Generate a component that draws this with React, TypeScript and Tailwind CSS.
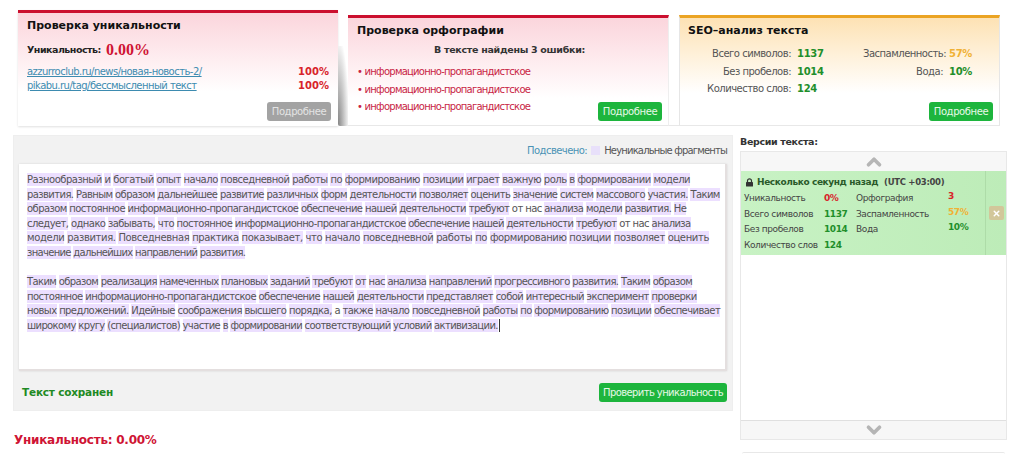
import React from 'react';
import { ChevronDown, ChevronUp, X } from 'lucide-react';

const firstParagraph = [
  { text: 'Разнообразный и богатый опыт начало повседневной работы по формированию позиции играет важную роль в формировании модели', fit: 'tracking-[-0.49px]' },
  { text: 'развития. Равным образом дальнейшее развитие различных форм деятельности позволяет оценить значение систем массового участия. Таким', fit: 'tracking-[-0.59px]' },
  { text: 'образом постоянное информационно-пропагандистское обеспечение нашей деятельности требуют ~от ~нас анализа модели развития. Не', fit: 'tracking-[-0.58px]' },
  { text: 'следует, однако забывать, что постоянное информационно-пропагандистское обеспечение нашей деятельности требуют ~от ~нас анализа', fit: 'tracking-[-0.58px]' },
  { text: 'модели развития. Повседневная практика показывает, что начало повседневной работы по формированию позиции позволяет оценить', fit: 'tracking-[-0.37px]' },
  { text: 'значение дальнейших направлений развития.', fit: 'tracking-[-0.68px]' },
];

const secondParagraph = [
  { text: 'Таким образом реализация намеченных плановых заданий требуют от нас анализа направлений прогрессивного развития. Таким образом', fit: 'tracking-[-0.62px]' },
  { text: 'постоянное информационно-пропагандистское обеспечение нашей деятельности представляет собой интересный эксперимент проверки', fit: 'tracking-[-0.58px]' },
  { text: 'новых предложений. Идейные соображения высшего порядка, ~а также начало повседневной работы по формированию позиции обеспечивает', fit: 'tracking-[-0.57px]' },
  { text: 'широкому кругу (специалистов) участие в формировании соответствующий условий активизации.', fit: 'tracking-[-0.63px]' },
];

function HighlightedLine({ text, fit }: { text: string; fit: string }) {
  return (
    <div className={`whitespace-nowrap ${fit}`}>
      {text.split(' ').map((word, i) => (
        <React.Fragment key={i}>
          {i > 0 && ' '}
          {word.startsWith('~') ? word.slice(1) : <span className="bg-[#ecdfff] py-[1px]">{word}</span>}
        </React.Fragment>
      ))}
    </div>
  );
}

function MoreButton({ gray = false }: { gray?: boolean }) {
  return (
    <button
      className={`h-[19px] w-[64px] rounded-[3px] text-[10px] leading-[19px] tracking-[-0.4px] text-center ${
        gray ? 'bg-[#a3a3a3] text-[#e4e4e4]' : 'bg-[#1db53d] text-[#e8f8e8]'
      }`}
    >
      Подробнее
    </button>
  );
}

function Stat({ label, value, color = 'text-[#1f8f2b]', w = 'w-[103px]' }: { label: string; value: string; color?: string; w?: string }) {
  return (
    <div className="flex h-[17.5px] items-center whitespace-nowrap">
      <span className={`${w} text-right tracking-[-0.5px] text-[#555]`}>{label}</span>
      <span className={`ml-[6px] text-[10px] font-bold tracking-[-0.3px] ${color}`}>{value}</span>
    </div>
  );
}

function VersionRow({ a, b, c, d, bColor = 'text-[#1f8f2b]', dColor = 'text-[#1f8f2b]' }: { a: string; b: string; c?: string; d?: string; bColor?: string; dColor?: string }) {
  return (
    <div className="flex h-[15.7px] items-center whitespace-nowrap text-[9px] tracking-[-0.4px] text-[#444]">
      <span className="w-[80px]">{a}</span>
      <span className={`w-[32px] text-[9px] font-bold ${bColor}`}>{b}</span>
      <span className="w-[92px]">{c}</span>
      <span className={`mb-[4px] text-[9px] font-bold ${dColor}`}>{d}</span>
    </div>
  );
}

export default function App() {
  return (
    <div className="relative h-[454px] w-[1024px] overflow-hidden bg-white font-['DejaVu_Sans',sans-serif] text-[#444]">
      {/* Top cards */}
      <div className="ml-[18px] flex h-[126px] w-[982px] items-end pt-[10px]">
        <div className="flex h-[116px] w-[320px] flex-col border-t-[3px] border-[#cb0f2e] bg-gradient-to-b from-[#fbd5dc] to-white to-70% pl-[9px] pr-[7px] shadow-[0_1px_2px_rgba(0,0,0,0.12)]">
          <h2 className="mt-[4px] text-[11px] font-bold leading-[18px] text-[#111]">Проверка уникальности</h2>
          <div className="mt-[5px] flex h-[20px] items-center text-[9.5px] font-bold tracking-[-0.5px] text-[#222]">
            Уникальность:
            <span className="ml-[5px] font-['Liberation_Serif',serif] text-[16px] tracking-normal text-[#cf1434]">0.00%</span>
          </div>
          <div className="mt-[5px] flex justify-between pr-[2px] text-[10px] leading-[13.5px]">
            <a className="tracking-[-0.53px] text-[#3d8bb0] underline">azzurroclub.ru/news/новая-новость-2/</a>
            <span className="font-bold text-[#d8232a]">100%</span>
          </div>
          <div className="flex justify-between pr-[2px] text-[10px] leading-[13.5px]">
            <a className="tracking-[-0.53px] text-[#3d8bb0] underline">pikabu.ru/tag/бессмысленный текст</a>
            <span className="font-bold text-[#d8232a]">100%</span>
          </div>
          <div className="mt-[10px] flex justify-end">
            <MoreButton gray />
          </div>
        </div>

        <div className="h-[80px] w-[10px] rounded-bl-[2px] bg-[radial-gradient(ellipse_at_bottom_left,#858585,#ffffff_80%)]" />

        <div className="flex h-[111px] w-[321px] flex-col border-r border-b border-r-[#eeeeee] border-b-[#e8e8e8] border-t-[3px] border-t-[#cb0f2e] bg-gradient-to-b from-[#fbd5dc] to-white to-75% pl-[9px] pr-[6px]">
          <h2 className="mt-[4px] text-[11px] font-bold leading-[18px] text-[#111]">Проверка орфографии</h2>
          <div className="mt-[2px] text-center text-[9.5px] font-bold leading-[16px] tracking-[-0.3px] text-[#333]">В тексте найдены 3 ошибки:</div>
          <div className="relative mt-[5px] whitespace-nowrap text-[10px] leading-[17.5px] tracking-[-0.75px] text-[#c81f45]">
            <div>• информационно-пропагандистское</div>
            <div>• информационно-пропагандистское</div>
            <div>• информационно-пропагандистское</div>
            <div className="absolute bottom-[-5px] right-0 tracking-normal">
              <MoreButton />
            </div>
          </div>
        </div>

        <div className="h-[110px] w-[10px] border-b border-[#e8e8e8]" />

        <div className="flex h-[111px] w-[321px] flex-col border-x border-b border-t-[3px] border-x-[#e6e6e6] border-b-[#e8e8e8] border-t-[#eba423] bg-gradient-to-b from-[#fde2b4] to-white to-70% pl-[8px] pr-[6px]">
          <h2 className="mt-[4px] text-[11px] font-bold leading-[18px] text-[#111]">SEO–анализ текста</h2>
          <div className="mt-[5px] flex text-[10px]">
            <div className="w-[175px]">
              <Stat label="Всего символов:" value="1137" />
              <Stat label="Без пробелов:" value="1014" />
              <Stat label="Количество слов:" value="124" />
            </div>
            <div>
              <Stat label="Заспамленность:" value="57%" color="text-[#f0b135]" w="w-[80px]" />
              <Stat label="Вода:" value="10%" w="w-[80px]" />
            </div>
          </div>
          <div className="mt-[4px] flex justify-end">
            <MoreButton />
          </div>
        </div>
      </div>

      <div className="flex pl-[13px] pt-[9px]">
        {/* Main editor */}
        <div className="w-[720px]">
          <div className="h-[276px] border border-[#eeeeee] bg-[#f2f2f2] px-[5px]">
            <div className="flex h-[28px] items-center justify-end text-[10px]">
              <span className="tracking-[-0.55px] text-[#4a93b5]">Подсвечено:</span>
              <span className="ml-[4px] h-[9px] w-[9px] bg-[#e8e0fa]" />
              <span className="ml-[4px] tracking-[-0.83px] text-[#555]">Неуникальные фрагменты</span>
            </div>
            <div className="h-[207px] border-b-2 border-r-2 border-[#e4dfdf] bg-white pl-[8px] pt-[9px] text-[10px] leading-[14.6px] text-[#555] shadow-[0_0_2px_rgba(0,0,0,0.12)]">
              {firstParagraph.map((line) => (
                <HighlightedLine key={line.text} text={line.text} fit={line.fit} />
              ))}
              <div className="h-[14.6px]" />
              {secondParagraph.map((line, i) => (
                <div key={line.text} className="flex">
                  <HighlightedLine text={line.text} fit={line.fit} />
                  {i === 3 && <span className="ml-[1px] h-[13px] w-px bg-[#333]" />}
                </div>
              ))}
            </div>
            <div className="mt-[12px] flex items-center justify-between">
              <span className="pl-[3px] text-[10.5px] font-bold tracking-[-0.2px] text-[#1f8a24]">Текст сохранен</span>
              <button className="h-[19px] w-[128px] whitespace-nowrap rounded-[3px] bg-[#1db53d] text-[10px] tracking-[-0.6px] text-[#e8f8e8]">Проверить уникальность</button>
            </div>
          </div>
          <div className="ml-[1px] mt-[20px] text-[12px] font-bold tracking-[-0.25px] text-[#cf1434]">Уникальность: 0.00%</div>
        </div>

        {/* Text versions */}
        <div className="ml-[7px] w-[267px]">
          <div className="h-[16px] text-[9.5px] font-bold leading-[14px] tracking-[-0.35px] text-[#333]">Версии текста:</div>
          <div className="flex h-[289px] flex-col border border-[#e8e8e8]">
            <div className="flex h-[19px] items-center justify-center bg-[#f7f7f7] text-[#b5b5b5]">
              <ChevronUp size={22} strokeWidth={4} className="shrink-0" />
            </div>
            <div className="flex h-[84px] bg-gradient-to-r from-[#c8f2c4] to-[#bdecb8]">
              <div className="w-[244px] pl-[3px] pt-[3px]">
                <div className="flex h-[17px] items-center whitespace-nowrap text-[9px] font-bold tracking-[-0.4px] text-[#2a5a2a]">
                  <svg viewBox="0 0 9 9" className="ml-[1px] mr-[3px] h-[9px] w-[9px] text-[#333]">
                    <path d="M2.5 4V2.8a2 2 0 0 1 4 0V4" fill="none" stroke="currentColor" strokeWidth="1.2" />
                    <rect x="1" y="4" width="7" height="4.5" rx="0.6" fill="currentColor" />
                  </svg>
                  Несколько секунд назад
                  <span className="ml-[6px] text-[8.5px] tracking-[-0.3px] text-[#444]">(UTC +03:00)</span>
                </div>
                <VersionRow a="Уникальность" b="0%" bColor="text-[#d8232a]" c="Орфография" d="3" dColor="text-[#d8232a]" />
                <VersionRow a="Всего символов" b="1137" c="Заспамленность" d="57%" dColor="text-[#f0b135]" />
                <VersionRow a="Без пробелов" b="1014" c="Вода" d="10%" />
                <VersionRow a="Количество слов" b="124" />
              </div>
              <div className="flex w-[21px] items-center justify-center border-l border-[#aedca8]">
                <span className="flex h-[14px] w-[15px] items-center justify-center rounded-[2px] bg-[#d2c79a] text-white">
                  <X size={9} strokeWidth={4} />
                </span>
              </div>
            </div>
            <div className="flex-1 bg-white" />
            <div className="flex h-[19px] items-center justify-center border-t border-[#e0e0e0] bg-[#f7f7f7] text-[#b5b5b5]">
              <ChevronDown size={22} strokeWidth={4} className="shrink-0" />
            </div>
          </div>
          <div className="mt-[12px] ml-[2px] h-[10px] w-[263px] rounded-t-[2px] border-t border-[#e8e8e8]" />
        </div>
      </div>
    </div>
  );
}
